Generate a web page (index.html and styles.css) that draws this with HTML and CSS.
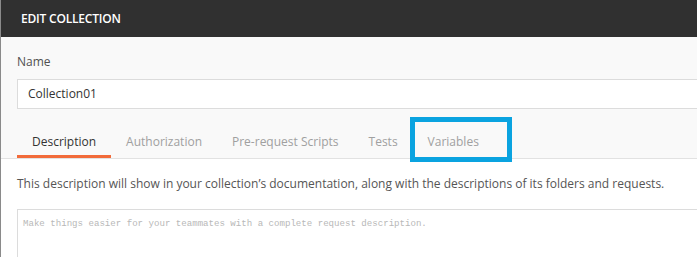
FILE: index.html
```html
<!DOCTYPE html>
<html lang="en">
<head>
  <meta charset="UTF-8" />
  <title>Edit Collection</title>
  <link rel="stylesheet" href="styles.css">
</head>
<body>

<div class="modal">
  <div class="modal-header">EDIT COLLECTION</div>

  <div class="modal-body">
    <label class="field-label">Name</label>
    <div class="input">Collection01</div>

    <div class="tabs">
      <div class="tab active">Description</div>
      <div class="tab">Authorization</div>
      <div class="tab">Pre-request Scripts</div>
      <div class="tab">Tests</div>
      <div class="tab highlighted">Variables</div>
    </div>
  </div>

  <div class="tab-content">
    <p class="hint">This description will show in your collection’s documentation, along with the descriptions of its folders and requests.</p>
    <div class="textarea">Make things easier for your teammates with a complete request description.</div>
  </div>
</div>

</body>
</html>
```

FILE: styles.css
```css
*, *::before, *::after { margin: 0; padding: 0; box-sizing: border-box; }

body {
  font-family: 'Open Sans', sans-serif;
  background: #fff;
  overflow: hidden;
}

.modal {
  width: 697px;
  height: 257px;
  border-left: 1px solid #8a8a8a;
  background: #fff;
}

.modal-header {
  height: 37px;
  background: #303030;
  color: #fff;
  font-size: 12px;
  font-weight: 600;
  line-height: 37px;
  padding-left: 20px;
  letter-spacing: -0.2px;
}

.modal-body {
  background: #f9f9f9;
  padding: 16px 0 0 16px;
}

.field-label {
  display: block;
  font-size: 12px;
  color: #505050;
  line-height: 18px;
}

.input {
  margin-top: 8px;
  height: 30px;
  background: #fff;
  border: 1px solid #dcdcdc;
  border-right: none;
  font-size: 12px;
  color: #333;
  line-height: 28px;
  padding-left: 10px;
}

.tabs {
  display: flex;
  margin-top: 13px;
  margin-left: -16px;
  padding-left: 16px;
  border-bottom: 1px solid #e2e2e2;
}

.tab {
  position: relative;
  padding: 6px 15px 0;
  height: 36px;
  line-height: 27px;
  font-size: 12px;
  color: #a0a0a0;
  border-bottom: 3px solid transparent;
}

.tab.active {
  color: #333;
  border-bottom-color: #f26b3a;
}

.tab.highlighted::after {
  content: "";
  position: absolute;
  left: -3px;
  top: -5px;
  width: 102px;
  height: 45px;
  border: 5px solid #0aa3e0;
}

.tab-content {
  padding: 16px 0 0 16px;
}

.hint {
  font-size: 12px;
  color: #555;
  line-height: 18px;
}

.textarea {
  margin-top: 16px;
  height: 60px;
  border: 1px solid #dcdcdc;
  border-right: none;
  border-bottom: none;
  font-family: 'Liberation Mono', monospace;
  font-size: 9.1px;
  color: #b8b8b8;
  padding: 8px 5px;
}
```
